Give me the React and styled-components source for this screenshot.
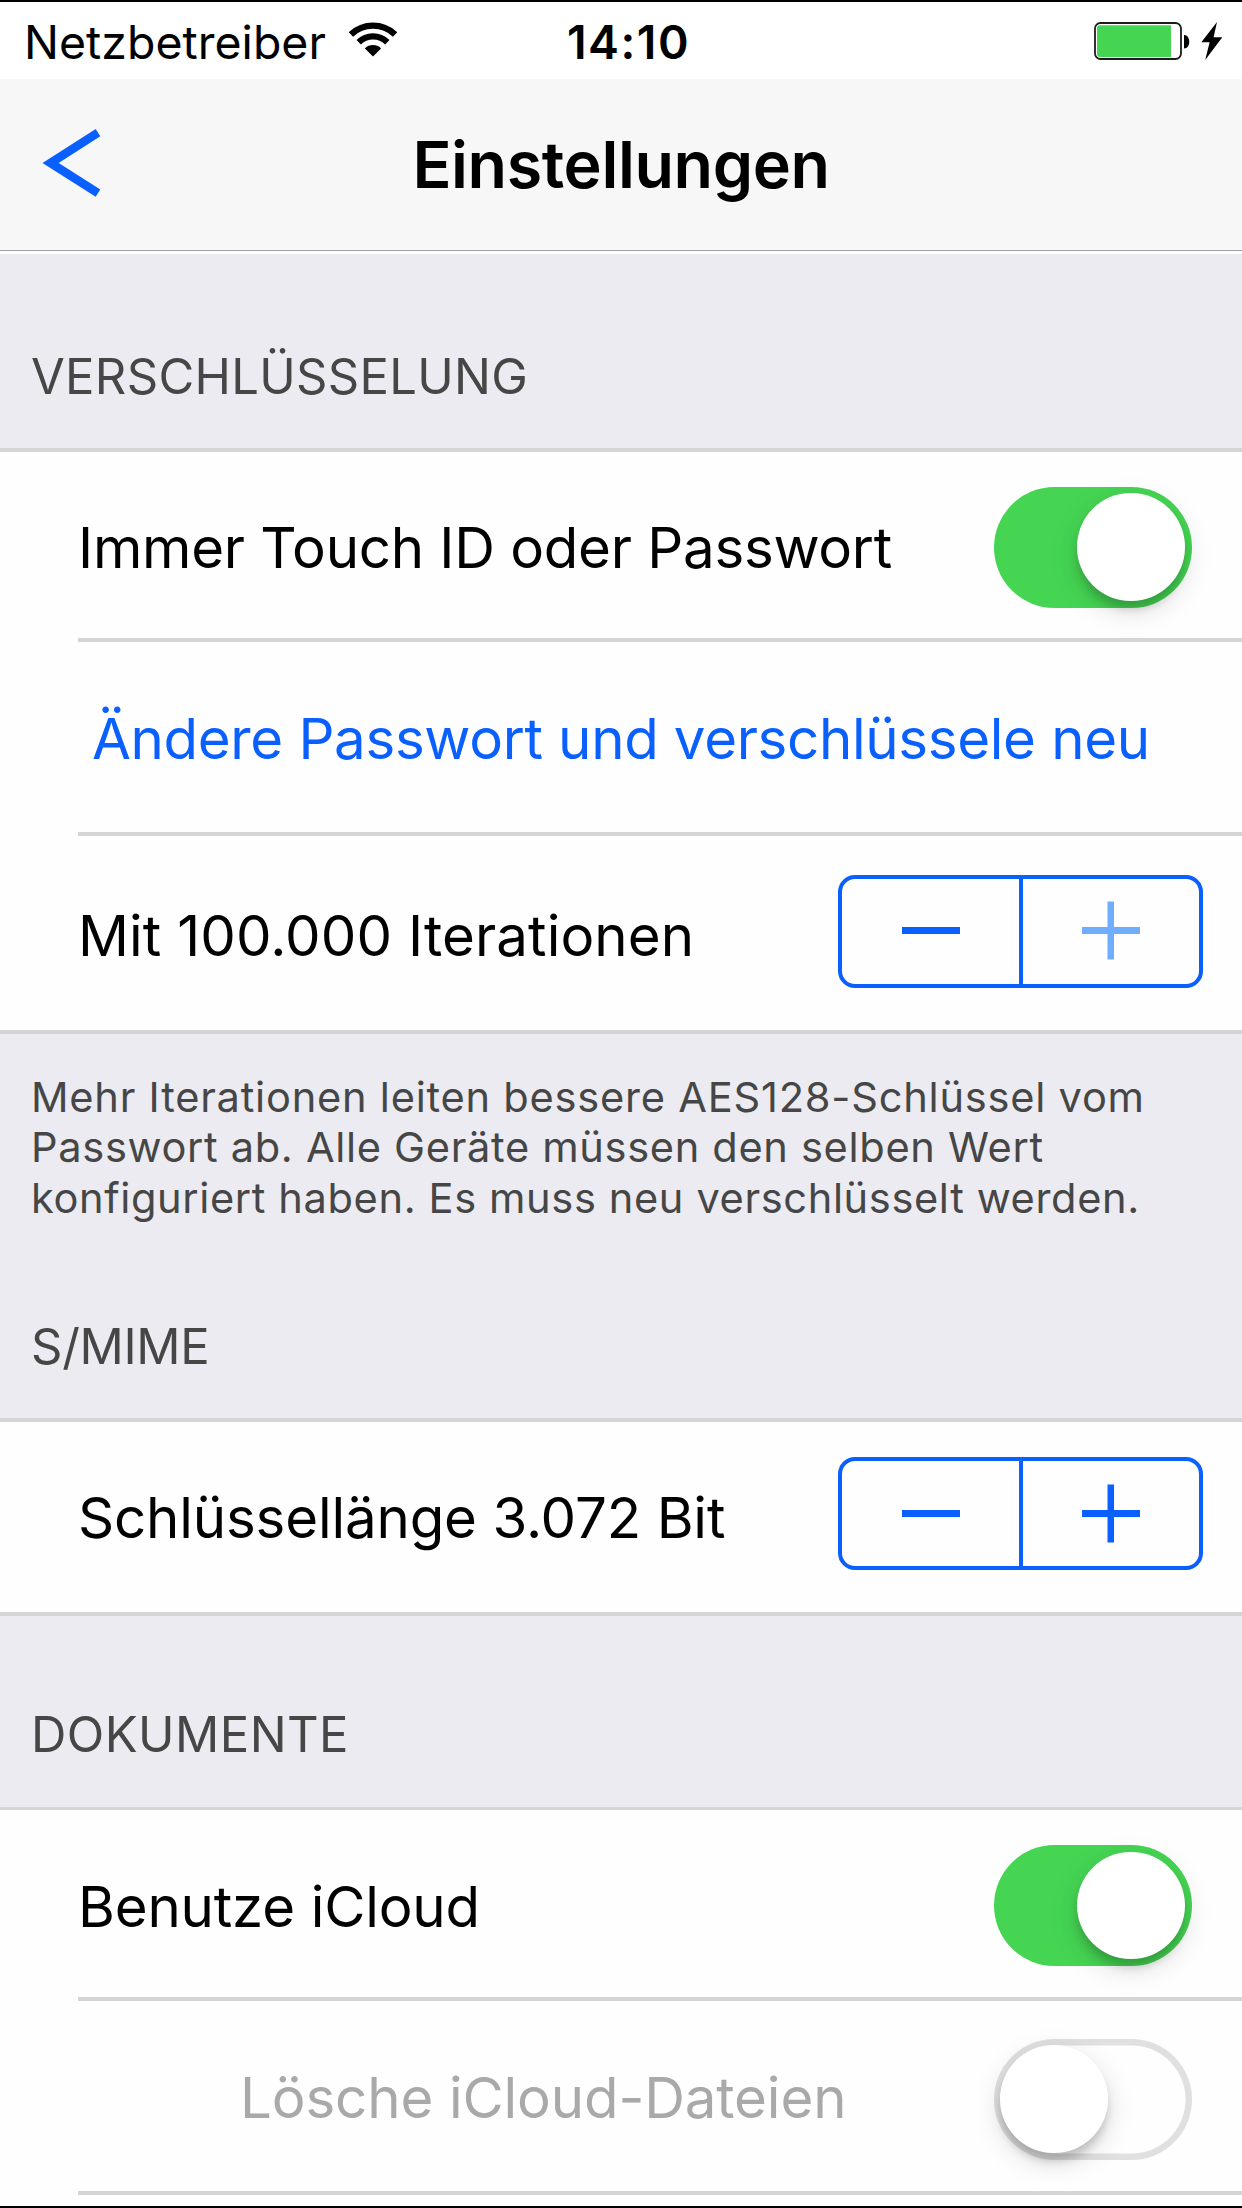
import React from "react";
import styled, { createGlobalStyle } from "styled-components";

const GlobalStyle = createGlobalStyle`
  * { box-sizing: border-box; }
  body {
    margin: 0;
    background: #fefefe;
    font-family: Inter, "Liberation Sans", sans-serif;
    color: #000;
  }
`;

const Screen = styled.div`
  display: flex;
  flex-direction: column;
  width: 1242px;
  height: 2208px;
  overflow: hidden;
  background: #fefefe;
  border-top: 2px solid #000;
  border-bottom: 2px solid #000;
`;

const StatusBar = styled.header`
  display: grid;
  grid-template-columns: 567px 1fr auto;
  align-items: center;
  flex: none;
  height: 77px;
  padding-right: 19px;
  background: #fff;
  font-size: 46.4px;
  line-height: 56px;
`;

const Carrier = styled.div`
  display: flex;
  align-items: center;
  gap: 23px;
  padding-left: 24px;
  letter-spacing: 0.05px;
  svg {
    flex: none;
    margin-bottom: 3px;
  }
`;

const CarrierName = styled.span`
  padding-top: 3px;
`;

const Clock = styled.time`
  padding-top: 3px;
  font-weight: 600;
  letter-spacing: 1.5px;
`;

const Power = styled.div`
  display: flex;
  align-items: center;
  gap: 11px;
`;

const NavBar = styled.nav`
  display: grid;
  grid-template-columns: 1fr auto 1fr;
  align-items: center;
  flex: none;
  height: 172px;
  background: #f7f7f7;
  border-bottom: 1px solid #a2a2a4;
`;

const BackButton = styled.button`
  display: flex;
  width: 60px;
  margin: 0 0 3px 41px;
  padding: 0;
  border: 0;
  background: none;
`;

const Title = styled.h1`
  margin: 0;
  font-size: 64.6px;
  font-weight: 600;
  line-height: 80px;
  letter-spacing: -0.4px;
`;

const Content = styled.main`
  flex: 1;
  padding-top: 3px;
`;

const SectionTitle = styled.h2`
  height: ${(p) => (p.$compact ? 191 : 194)}px;
  margin: 0;
  padding: ${(p) => (p.$compact ? 89 : 93)}px 0 0 31px;
  background: #ebebf1;
  color: #464646;
  font-size: 49px;
  font-weight: 400;
  line-height: 60px;
  letter-spacing: ${(p) => p.$tracking}px;
`;

const Group = styled.div`
  border-top: ${(p) => (p.$thin ? 3 : 4)}px solid #d5d5d5;
  border-bottom: ${(p) => (p.$open ? 0 : 4)}px solid #d5d5d5;
`;

const Row = styled.div`
  display: flex;
  align-items: center;
  justify-content: space-between;
  height: ${(p) => p.$height}px;
  padding-right: ${(p) => p.$end || 0}px;
`;

const Divider = styled.hr`
  height: 4px;
  margin: 0 0 0 78px;
  border: 0;
  background: #d5d5d5;
`;

const Label = styled.span`
  padding: ${(p) => p.$drop}px 0 0 ${(p) => p.$indent || 78}px;
  color: ${(p) => (p.$muted ? "#a9a9a9" : "#000")};
  font-size: 56.4px;
  line-height: 68px;
  letter-spacing: ${(p) => p.$tracking}px;
  white-space: nowrap;
`;

const LinkLabel = styled(Label)`
  color: #0a60ff;
`;

const Footnote = styled.p`
  height: 190px;
  margin: 0;
  padding: 38px 0 0 31px;
  background: #ebebf1;
  color: #464646;
  font-size: 41.6px;
  line-height: 50.3px;
  white-space: nowrap;
`;

const FootnoteLine = styled.span`
  display: block;
  letter-spacing: ${(p) => p.$tracking}px;
`;

const Track = styled.span`
  display: flex;
  flex: none;
  align-items: center;
  justify-content: ${(p) => (p.$on ? "flex-end" : "flex-start")};
  width: 198px;
  height: 121px;
  margin-top: ${(p) => (p.$on ? 4 : 6)}px;
  padding: 0 ${(p) => (p.$on ? 7.5 : 6)}px;
  border-radius: 61px;
  background: ${(p) => (p.$on ? "#45d553" : "transparent")};
  box-shadow: ${(p) => (p.$on ? "none" : "inset 0 0 0 6.5px #e0e0e0")};
`;

const Knob = styled.span`
  width: 107.5px;
  height: 107.5px;
  border-radius: 50%;
  background: #fff;
  box-shadow: 0 9px 28px rgba(0, 0, 0, 0.15), 0 9px 9px -1px rgba(0, 0, 0, 0.16);
`;

const StepperFrame = styled.div`
  display: grid;
  grid-template-columns: 177px 4px 1fr;
  flex: none;
  width: 365px;
  height: 113px;
  margin-bottom: ${(p) => p.$lift}px;
  border: 4px solid #0a60ff;
  border-radius: 17px;
`;

const StepperSplit = styled.span`
  background: #0a60ff;
`;

const StepperButton = styled.button`
  display: flex;
  align-items: center;
  justify-content: center;
  padding: 0;
  border: 0;
  background: none;
  color: ${(p) => (p.disabled ? "#70adff" : "#0a60ff")};
`;

const WifiIcon = () => (
  <svg width="48" height="36" viewBox="0 0 48 36">
    <g fill="none" stroke="#000">
      <path d="M1.95 13.45 A31.9 31.9 0 0 1 46.05 13.45" strokeWidth="6.2" />
      <path d="M9.7 21.2 A20.3 20.3 0 0 1 38.3 21.2" strokeWidth="6.2" />
    </g>
    <path d="M24 35.5 L15.9 27.4 A11.6 11.6 0 0 1 32.1 27.4 Z" />
  </svg>
);

const BatteryIcon = () => (
  <svg width="96" height="38" viewBox="0 0 96 38">
    <rect x="1" y="1" width="86" height="36" rx="5.5" fill="#fff" stroke="#1c1c1c" strokeWidth="1.8" />
    <path d="M6 3.2 H77 V35 H6 A3 3 0 0 1 3 32 V6.2 A3 3 0 0 1 6 3.2 Z" fill="#45d553" />
    <path d="M90 13 C97 13 97 26.5 90 26.5 Z" />
  </svg>
);

const BoltIcon = () => (
  <svg width="22" height="38" viewBox="0 0 22 38">
    <path d="M16 0 L0.3 20.3 H8.6 L4.2 38 L21.3 15.2 H12.6 Z" />
  </svg>
);

const BackIcon = () => (
  <svg width="60" height="68" viewBox="0 0 60 68" fill="none" stroke="#0a60ff" strokeWidth="8.6">
    <path d="M57 3.7 L9.5 34 L57 64.2" />
  </svg>
);

const MinusIcon = () => (
  <svg width="58" height="60" viewBox="0 0 58 60" fill="currentColor">
    <rect y="26" width="58" height="7" />
  </svg>
);

const PlusIcon = () => (
  <svg width="58" height="60" viewBox="0 0 58 60" fill="currentColor">
    <rect y="26" width="58" height="7" />
    <rect x="25.5" y="0.5" width="6.5" height="58" />
  </svg>
);

const Switch = ({ on }) => (
  <Track $on={on} role="switch" aria-checked={on}>
    <Knob />
  </Track>
);

const Stepper = ({ lift, atMaximum }) => (
  <StepperFrame $lift={lift}>
    <StepperButton>
      <MinusIcon />
    </StepperButton>
    <StepperSplit />
    <StepperButton disabled={atMaximum}>
      <PlusIcon />
    </StepperButton>
  </StepperFrame>
);

export default function App() {
  return (
    <Screen>
      <GlobalStyle />
      <StatusBar>
        <Carrier>
          <CarrierName>Netzbetreiber</CarrierName>
          <WifiIcon />
        </Carrier>
        <Clock>14:10</Clock>
        <Power>
          <BatteryIcon />
          <BoltIcon />
        </Power>
      </StatusBar>
      <NavBar>
        <BackButton>
          <BackIcon />
        </BackButton>
        <Title>Einstellungen</Title>
      </NavBar>
      <Content>
        <SectionTitle $tracking={0.3}>VERSCHLÜSSELUNG</SectionTitle>
        <Group>
          <Row $height={186} $end={50}>
            <Label $drop={6} $tracking={-0.26}>Immer Touch ID oder Passwort</Label>
            <Switch on />
          </Row>
          <Divider />
          <Row $height={190}>
            <LinkLabel $drop={4} $indent={92} $tracking={-0.32}>
              Ändere Passwort und verschlüssele neu
            </LinkLabel>
          </Row>
          <Divider />
          <Row $height={194} $end={39}>
            <Label $drop={6} $tracking={0.09}>Mit 100.000 Iterationen</Label>
            <Stepper lift={4} atMaximum />
          </Row>
        </Group>
        <Footnote>
          <FootnoteLine $tracking={0.77}>Mehr Iterationen leiten bessere AES128-Schlüssel vom</FootnoteLine>
          <FootnoteLine $tracking={0.67}>Passwort ab. Alle Geräte müssen den selben Wert</FootnoteLine>
          <FootnoteLine $tracking={0.62}>konfiguriert haben. Es muss neu verschlüsselt werden.</FootnoteLine>
        </Footnote>
        <SectionTitle $tracking={-0.3}>S/MIME</SectionTitle>
        <Group>
          <Row $height={190} $end={39}>
            <Label $drop={2} $tracking={-0.15}>Schlüssellänge 3.072 Bit</Label>
            <Stepper lift={7} />
          </Row>
        </Group>
        <SectionTitle $compact $tracking={0.45}>DOKUMENTE</SectionTitle>
        <Group $thin $open>
          <Row $height={187} $end={50}>
            <Label $drop={6} $tracking={-0.16}>Benutze iCloud</Label>
            <Switch on />
          </Row>
          <Divider />
          <Row $height={190} $end={50}>
            <Label $muted $drop={4} $indent={240} $tracking={-0.12}>Lösche iCloud-Dateien</Label>
            <Switch on={false} />
          </Row>
          <Divider />
        </Group>
      </Content>
    </Screen>
  );
}
